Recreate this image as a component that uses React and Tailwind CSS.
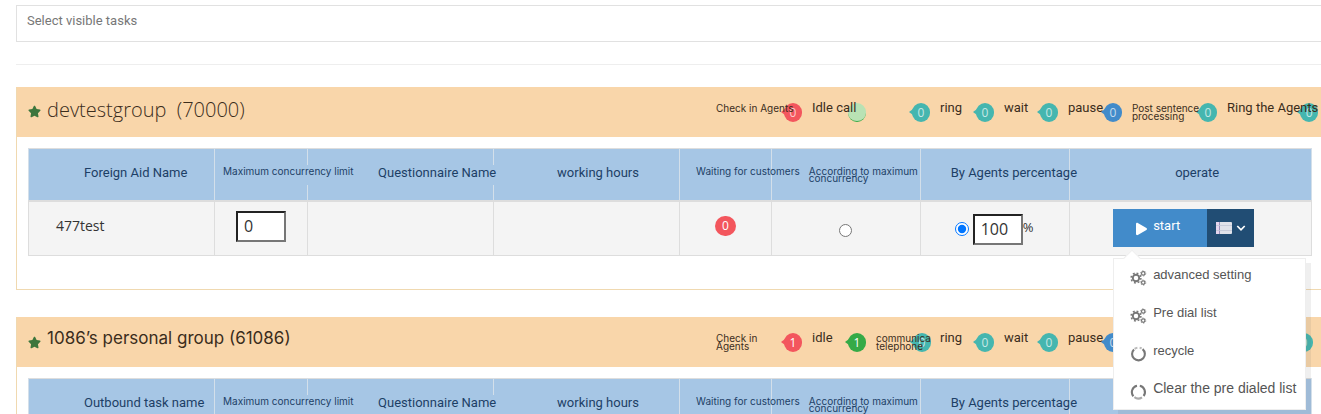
import React from "react";
import { FaStar, FaPlay } from "react-icons/fa";

const UI = "font-[Roboto,sans-serif]";
const WIDE = "font-['Inter',sans-serif]";
const OPEN = "font-['Open_Sans',sans-serif]";
const ARIAL = "font-['Liberation_Sans',sans-serif]";

const BADGE = {
  red: "bg-[#f3565d] before:border-r-[#f3565d]",
  green: "bg-[#35aa47] before:border-r-[#35aa47]",
  pale: "bg-[#b9e2b4] text-transparent border-b border-[#35aa47] before:border-r-transparent",
  teal: "bg-[#45b6af] before:border-r-[#45b6af]",
  blue: "bg-[#428bca] before:border-r-[#428bca]",
};

const NORMAL = `${UI} text-[13px] leading-4`;
const SMALL = `${WIDE} text-[10px] leading-2`;

function Status({ label, value, tone, small, faded }) {
  return (
    <div className="grid h-6 items-start">
      <span
        className={`relative col-start-1 row-start-1 mt-[3px] flex h-[19px] w-[18px] items-center justify-center justify-self-end rounded-full ${OPEN} text-xs before:absolute before:-left-[3px] before:top-[6px] before:border-y-[3px] before:border-r-4 before:border-y-transparent ${BADGE[tone]} ${tone === "pale" ? "" : faded ? "text-white/70" : "text-white"}`}
      >
        {value}
      </span>
      <span className={`relative col-start-1 row-start-1 justify-self-start whitespace-pre text-[#3b2d1c] ${small ? `${SMALL} pt-1` : NORMAL}`}>
        {label}
      </span>
    </div>
  );
}

function Group({ title, light, statuses, children }) {
  return (
    <section className="border-b border-l border-[#f0d9b0]">
      <header className="flex h-[50px] items-center justify-between bg-[#f9d6aa] pl-[11px] pr-2">
        <h2 className={`flex items-center gap-1.5 text-[#3b2d1c] ${light ? "mb-1" : "mb-2"}`}>
          <FaStar className={`size-[13px] text-[#3c763d] ${light ? "mt-0.5" : "mt-2"}`} />
          <span className={light ? `${OPEN} whitespace-pre text-xl font-light` : `${WIDE} text-[17px] leading-6`}>{title}</span>
        </h2>
        <div className="grid grid-cols-[86px_54px_54px_54px_54px_54px_85px_86px] gap-x-2.5">
          {statuses.map((s, i) => (
            <Status key={i} {...s} />
          ))}
        </div>
      </header>
      <div className="pb-[33px] pl-[11px] pr-[9px] pt-[11px]">{children}</div>
    </section>
  );
}

const HEADS = [
  { pad: "pl-[55px]" },
  { label: "Maximum concurrency limit", pad: "pl-2", small: true, cover: true },
  { label: "Questionnaire Name", pad: "pl-[70px]", cover: true },
  { label: "working hours", pad: "pl-[63px]" },
  { label: "Waiting for customers", pad: "pl-4", small: true },
  { label: "According to maximum\nconcurrency", pad: "pl-[37px]", small: true },
  { label: "By Agents percentage", pad: "pl-[30px]" },
  { label: "operate", pad: "pl-[105px]" },
];

function TaskTable({ first, children }) {
  return (
    <table className="w-full table-fixed border-collapse border border-[#ddd]">
      <colgroup>
        <col className="w-[14.5%]" />
        <col className="w-[7.25%]" />
        <col className="w-[14.5%]" />
        <col className="w-[14.5%]" />
        <col className="w-[7.15%]" />
        <col className="w-[11.6%]" />
        <col className="w-[11.65%]" />
        <col />
      </colgroup>
      <thead>
        <tr className="h-[52px] border-b-2 border-[#ddd] bg-[#a6c6e5]">
          {HEADS.map((h, i) => (
            <th key={i} className={`border-x border-[#d3dfea] p-0 text-left align-top font-normal text-[#1d3f66] ${h.pad}`}>
              {/* The second line of a compact heading hangs below the shared baseline */}
              <div
                className={`relative mt-4 h-5 w-max whitespace-pre ${h.small ? `${WIDE} pt-[3px] text-[10px] leading-[7px]` : `${UI} text-[13px] leading-4`} ${h.cover ? "bg-[#a6c6e5]" : ""}`}
              >
                {i === 0 ? first : h.label}
              </div>
            </th>
          ))}
        </tr>
      </thead>
      {children}
    </table>
  );
}

function Gears() {
  return (
    <svg viewBox="0 0 17 16" className="h-4 w-[17px]" fill="none" stroke="#777">
      <circle cx="6" cy="8" r="3.2" strokeWidth="1.9" />
      <circle cx="6" cy="8" r="4.9" strokeWidth="1.5" strokeDasharray="1.9 1.948" />
      <circle cx="13.2" cy="3.4" r="1.7" strokeWidth="1.2" />
      <circle cx="13.2" cy="3.4" r="2.6" strokeWidth=".8" strokeDasharray="1.3 1.42" />
      <circle cx="13.2" cy="12.6" r="1.7" strokeWidth="1.2" />
      <circle cx="13.2" cy="12.6" r="2.6" strokeWidth=".8" strokeDasharray="1.3 1.42" />
    </svg>
  );
}

function Ring({ broken }) {
  return (
    <svg viewBox="0 0 17 16" className="h-4 w-[17px]" fill="none" strokeWidth="2.1">
      {broken ? (
        <>
          <path d="M9.8 1.8A6.4 6.4 0 0 1 13.6 12" stroke="#777" />
          <path d="M7 1.8A6.4 6.4 0 0 0 3.4 12.2" stroke="#777" />
          <path d="M4.4 13.2A6.4 6.4 0 0 0 12 13.3" stroke="#aaa" />
        </>
      ) : (
        <>
          <path d="M12.6 3.1A6.4 6.4 0 1 1 4 3.4" stroke="#777" />
          <path d="M4.6 2.9A6.4 6.4 0 0 1 7.4 1.8M9.6 1.8A6.4 6.4 0 0 1 11.6 2.5" stroke="#bbb" />
        </>
      )}
    </svg>
  );
}

const MENU = [
  { label: "advanced setting", icon: <Gears /> },
  { label: "Pre dial list", icon: <Gears /> },
  { label: "recycle", icon: <Ring /> },
  { label: "Clear the pre dialed list", icon: <Ring broken />, wide: true },
];

function Menu() {
  return (
    <div className="absolute left-0 top-full z-20 mt-[11px] w-[193px] border border-[#eee] bg-white shadow-[5px_5px_rgba(102,102,102,0.1)]">
      <span className="absolute -top-[7px] left-3 size-3 rotate-45 border-l border-t border-[#eee] bg-white" />
      <ul className="relative -mt-0.5">
        {MENU.map((m) => (
          <li key={m.label}>
            <button type="button" className="flex h-[38px] w-full items-center gap-1.5 pl-4">
              <span className="mt-1">{m.icon}</span>
              <span className={`mb-1 whitespace-nowrap text-[#555] ${ARIAL} ${m.wide ? "text-sm" : "text-[13px]"}`}>{m.label}</span>
            </button>
          </li>
        ))}
      </ul>
    </div>
  );
}

function Actions() {
  return (
    <div className="relative ml-[43px] flex h-[38px] w-max">
      <button type="button" className={`flex w-[94px] items-center gap-1.5 bg-[#428bca] pl-[23px] text-white ${UI} text-[13px]`}>
        <FaPlay className="mt-0.5 h-3.5 w-[11px]" />
        <span className="mb-1.5">start</span>
      </button>
      <button type="button" aria-label="More actions" className="flex w-[47px] items-center gap-1 bg-[#214d74] pl-2">
        <svg viewBox="0 0 17 14" className="h-3.5 w-[17px]">
          <rect x="1" y="1" width="16" height="12" rx="1" fill="#dfe2ea" />
          <rect x="1" y="1" width="3" height="12" fill="#e6d5ee" />
          <path d="M4.5 1v12" stroke="#9d92bd" />
          <path d="M1 4.5h16M1 9.5h16" stroke="#c0c7d5" strokeWidth=".8" />
        </svg>
        <svg viewBox="0 0 10 10" className="size-2.5" fill="none" stroke="#fff" strokeWidth="1.7">
          <path d="M1.3 3 5 6.8 8.7 3" />
        </svg>
      </button>
      <Menu />
    </div>
  );
}

const CELL = "border border-[#ddd] p-0";
const BOX = `h-[31px] w-[50px] border-2 border-b-[#767676] border-l-[#222] border-r-[#767676] border-t-[#222] bg-white pl-1.5 text-base text-[#333] outline-none ${OPEN}`;

const TOP = [
  { label: "Check in Agents", value: "0", tone: "red", small: true, faded: true },
  { label: "Idle call", value: "", tone: "pale" },
  { label: "", value: "0", tone: "teal", faded: true },
  { label: "ring", value: "0", tone: "teal", faded: true },
  { label: "wait", value: "0", tone: "teal", faded: true },
  { label: "pause", value: "0", tone: "blue", faded: true },
  { label: "Post sentence\nprocessing", value: "0", tone: "teal", small: true, faded: true },
  { label: "Ring the Agents", value: "0", tone: "teal", faded: true },
];

const BOTTOM = [
  { label: "Check in\nAgents", value: "1", tone: "red", small: true },
  { label: "idle", value: "1", tone: "green" },
  { label: "communica\ntelephone", value: "0", tone: "teal", small: true, faded: true },
  { label: "ring", value: "0", tone: "teal", faded: true },
  { label: "wait", value: "0", tone: "teal", faded: true },
  { label: "pause", value: "0", tone: "blue", faded: true },
  { label: "", value: "0", tone: "teal", faded: true },
  { label: "", value: "0", tone: "teal", faded: true },
];

export default function App() {
  return (
    <main className="h-screen overflow-hidden bg-white pl-4 pt-[5px]">
      <input
        type="text"
        aria-label="Select visible tasks"
        placeholder="Select visible tasks"
        className={`block h-[37px] w-full border border-r-0 border-[#e1e1e1] pb-1.5 pl-2.5 text-[13px] text-[#666] outline-none placeholder:text-[#777] ${UI}`}
      />
      <hr className="mb-[22px] mt-[22px] border-[#eee]" />

      <Group title={"devtestgroup  (70000)"} light statuses={TOP}>
        <TaskTable first="Foreign Aid Name">
          <tbody>
            <tr className="h-[55px] bg-[#f4f4f4]">
              <td className={`${CELL} pb-1 pl-[27px] text-sm text-[#333] ${OPEN}`}>477test</td>
              <td className={`${CELL} pb-1 pl-[21px]`}>
                <input aria-label="Maximum concurrency limit" defaultValue="0" className={BOX} />
              </td>
              <td className={CELL} />
              <td className={CELL} />
              <td className={`${CELL} pb-1`}>
                <span className={`mx-auto flex h-5 w-[21px] items-center justify-center rounded-full bg-[#f3565d] text-xs text-white ${OPEN}`}>0</span>
              </td>
              <td className={CELL}>
                <input type="radio" name="mode" aria-label="According to maximum concurrency" className="mx-auto mt-1 block size-[13px]" />
              </td>
              <td className={CELL}>
                <div className="flex items-center pl-[34px] pt-0.5">
                  <input type="radio" name="mode" defaultChecked aria-label="By Agents percentage" className="mr-1 size-3.5 accent-[#0075ff]" />
                  <input aria-label="Percentage" defaultValue="100" className={BOX} />
                  <span className={`mb-1 text-[13px] text-[#333] ${OPEN}`}>%</span>
                </div>
              </td>
              <td className={CELL}>
                <Actions />
              </td>
            </tr>
          </tbody>
        </TaskTable>
      </Group>

      <div className="mt-[27px]">
        <Group title="1086’s personal group (61086)" statuses={BOTTOM}>
          <TaskTable first="Outbound task name" />
        </Group>
      </div>
    </main>
  );
}
